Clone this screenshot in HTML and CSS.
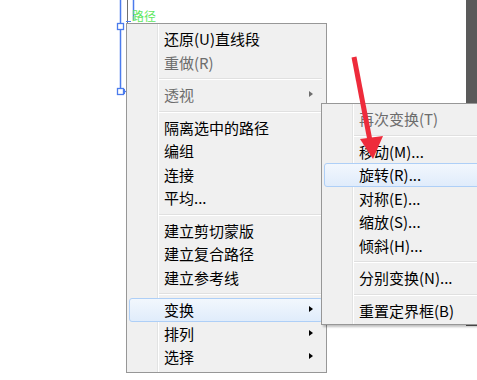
FILE: index.html
```html
<!DOCTYPE html>
<html lang="zh-CN">
<head>
    <meta charset="UTF-8">
    <meta name="viewport" content="width=device-width, initial-scale=1.0">
    <title>变换菜单</title>
    <link rel="stylesheet" href="styles.css">
</head>
<body>

<div class="canvas">
    <div class="dark-strip"></div>

    <!-- 选中路径的参考线和锚点 -->
    <svg class="guides" width="140" height="100" viewBox="0 0 140 100">
        <line x1="127.5" y1="0" x2="127.5" y2="24" stroke="#707070" stroke-width="1"/>
        <line x1="120.5" y1="0" x2="120.5" y2="92" stroke="#4b7bec" stroke-width="1.5"/>
        <line x1="133.5" y1="0" x2="133.5" y2="20" stroke="#4b7bec" stroke-width="1.5"/>
        <line x1="126" y1="21.5" x2="131" y2="21.5" stroke="#4b7bec" stroke-width="1"/>
        <rect x="117.5" y="23.5" width="6" height="6" fill="#fff" stroke="#4b7bec" stroke-width="1.3"/>
        <rect x="117.5" y="88.5" width="6" height="6" fill="#fff" stroke="#4b7bec" stroke-width="1.3"/>
        <line x1="123.5" y1="91.5" x2="127" y2="91.5" stroke="#4b7bec" stroke-width="1.3"/>
        <line x1="124.5" y1="89" x2="124.5" y2="94" stroke="#4b7bec" stroke-width="1"/>
    </svg>
    <span class="path-label">路径</span>

    <ul class="menu menu-main">
        <li class="item">还原(U)直线段</li>
        <li class="item disabled">重做(R)</li>
        <li class="sep"></li>
        <li class="item disabled has-sub">透视</li>
        <li class="sep"></li>
        <li class="item">隔离选中的路径</li>
        <li class="item">编组</li>
        <li class="item">连接</li>
        <li class="item">平均...</li>
        <li class="sep"></li>
        <li class="item">建立剪切蒙版</li>
        <li class="item">建立复合路径</li>
        <li class="item">建立参考线</li>
        <li class="sep"></li>
        <li class="item has-sub active">变换</li>
        <li class="item has-sub">排列</li>
        <li class="item has-sub">选择</li>
    </ul>

    <ul class="menu menu-sub">
        <li class="item disabled">再次变换(T)</li>
        <li class="sep"></li>
        <li class="item">移动(M)...</li>
        <li class="item active">旋转(R)...</li>
        <li class="item">对称(E)...</li>
        <li class="item">缩放(S)...</li>
        <li class="item">倾斜(H)...</li>
        <li class="sep"></li>
        <li class="item">分别变换(N)...</li>
        <li class="sep"></li>
        <li class="item">重置定界框(B)</li>
    </ul>

    <!-- 红色指示箭头 -->
    <svg class="arrow" width="477" height="380" viewBox="0 0 477 380">
        <line x1="354" y1="57" x2="371" y2="146" stroke="#ee2b3b" stroke-width="5"/>
        <polygon points="373,159 360,139 383,136" fill="#ee2b3b"/>
    </svg>
</div>

</body>
</html>
```

FILE: styles.css
```css
body {
    margin: 0;
    background-color: #fff;
    font-family: "Noto Sans CJK SC", "Noto Sans", sans-serif;
    overflow: hidden;
}

.canvas {
    position: relative;
    width: 477px;
    height: 380px;
    overflow: hidden;
}

.dark-strip {
    position: absolute;
    left: 466px;
    top: 0;
    width: 11px;
    height: 326px;
    background-color: #5a5a5a;
}

.guides {
    position: absolute;
    left: 0;
    top: 0;
}

.path-label {
    position: absolute;
    left: 132px;
    top: 9px;
    font-size: 12px;
    line-height: 14px;
    color: #5fe85f;
}

.menu {
    position: absolute;
    list-style-type: none;
    margin: 0;
    padding: 3px 0 0 0;
    border: 1px solid #979797;
    box-sizing: border-box;
    /* columna de iconos a la izquierda */
    background:
        linear-gradient(to right, transparent 30px, #e2e3e3 30px, #e2e3e3 31px, #fff 31px, #fff 32px, transparent 32px),
        #f0f0f0;
    font-size: 15px;
    color: #000;
}

.menu-main {
    left: 126px;
    top: 23px;
    width: 201px;
    height: 350px;
}

.menu-sub {
    left: 321px;
    top: 103px;
    width: 175px;
    height: 222px;
    box-shadow: 2px 2px 2px rgba(0, 0, 0, 0.25);
}

.item {
    position: relative;
    box-sizing: border-box;
    height: 23.5px;
    line-height: 23.5px;
    margin: 0 3px 0 2px;
    padding-left: 34px;
    border: 1px solid transparent;
    border-width: 0 1px;
    border-radius: 3px;
    white-space: nowrap;
}

.menu-sub .item {
    margin-right: 0;
}

.item.disabled {
    color: #6d6d6d;
}

.item.active {
    border: 1px solid #aecff7;
    line-height: 21.5px;
    background: linear-gradient(to bottom, #f2f7fd, #e0ecfb);
}

.has-sub::after {
    content: "";
    position: absolute;
    right: 9px;
    top: 8px;
    border-style: solid;
    border-width: 3.5px 0 3.5px 4px;
    border-color: transparent transparent transparent #000;
}

.has-sub.active::after {
    top: 7px;
}

.has-sub.disabled::after {
    border-left-color: #6d6d6d;
}

.sep {
    height: 1px;
    margin: 4px 4px 3px 32px;
    border-top: 1px solid #e0e0e0;
    background-color: #fff;
}

.arrow {
    position: absolute;
    left: 0;
    top: 0;
    pointer-events: none;
}
```
